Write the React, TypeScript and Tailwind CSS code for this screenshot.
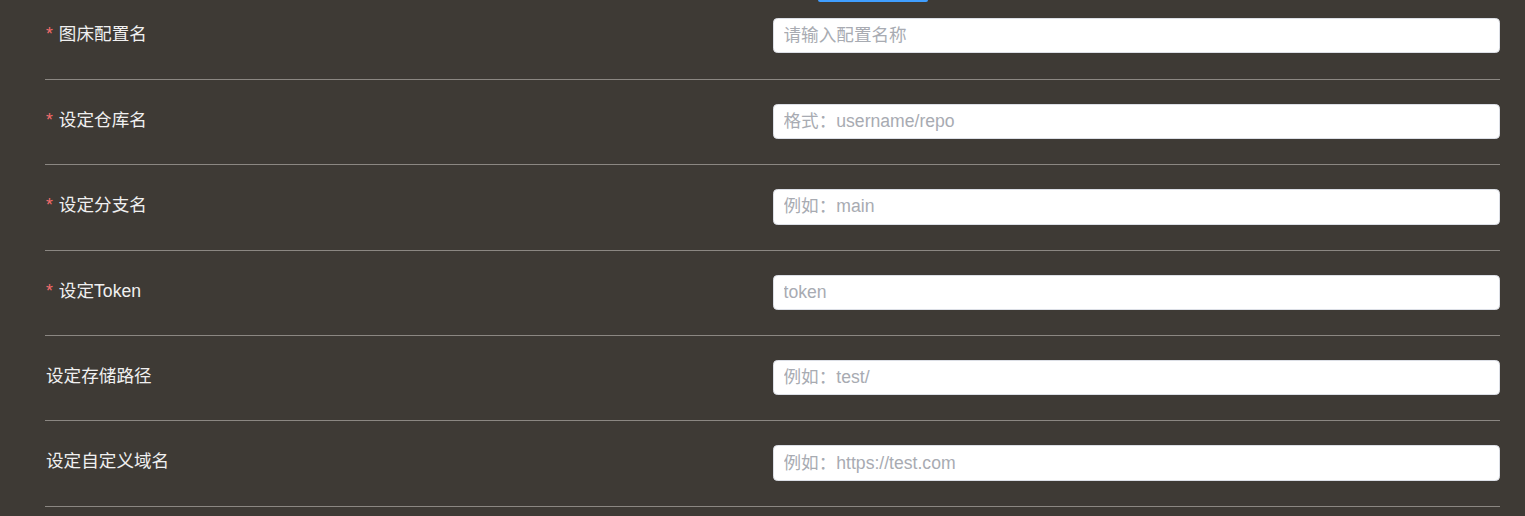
import React from "react";

type Field = {
  label: string;
  placeholder: string;
  required?: boolean;
};

const fields: Field[] = [
  { label: "图床配置名", placeholder: "请输入配置名称", required: true },
  { label: "设定仓库名", placeholder: "格式：username/repo", required: true },
  { label: "设定分支名", placeholder: "例如：main", required: true },
  { label: "设定Token", placeholder: "token", required: true },
  { label: "设定存储路径", placeholder: "例如：test/" },
  { label: "设定自定义域名", placeholder: "例如：https://test.com" },
];

const FONT = {
  fontFamily: '"Liberation Sans", "Noto Sans CJK SC", sans-serif',
};

export default function App() {
  return (
    <div
      className="w-[1525px] h-[516px] overflow-hidden bg-[#3e3a35]"
      style={FONT}
    >
      <div className="ml-[45px] mr-[25px]">
        {/* confirm button, scrolled mostly out of view */}
        <div className="ml-[773px] w-[110px] h-[2px] rounded-b-[3px] bg-[#409eff]"></div>

        {fields.map((field, i) => (
          <div
            key={field.label}
            className={
              "grid grid-cols-2 border-b border-[#8b8782] " +
              (i === 0 ? "pt-[16px] pb-[25.8px]" : "pt-[24px] pb-[25.2px]")
            }
          >
            {/* Label */}
            <label className="pl-px text-[17.6px] leading-[33px] text-[#f0f0f0]">
              {field.required && (
                <span className="mr-[6px] text-[#f56c6c]">*</span>
              )}
              {field.label}
            </label>

            {/* Input */}
            <input
              type="text"
              placeholder={field.placeholder}
              className="h-[35.2px] w-full rounded-[4.4px] border border-[#dcdfe6] bg-white px-[10px] text-[17.6px] text-[#606266] outline-none placeholder:text-[#a8abb2]"
              style={FONT}
            />
          </div>
        ))}
      </div>
    </div>
  );
}
